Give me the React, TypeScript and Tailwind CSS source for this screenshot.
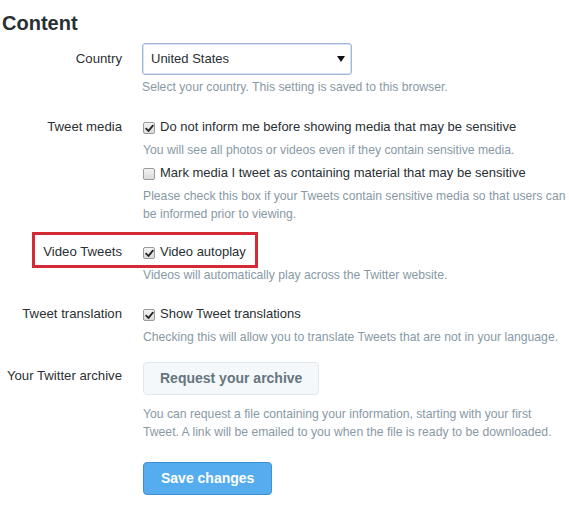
import React from "react";

function Check({ checked }: { checked: boolean }) {
  return (
    <span className="mt-[4px] flex h-[12px] w-[12px] shrink-0 items-center justify-center rounded-[2px] border border-[#9a9a9a] bg-gradient-to-b from-[#f4f4f4] to-[#dadada]">
      {checked && (
        <svg width="9" height="9" viewBox="0 0 9 9">
          <path d="M1.2 4.6 L3.5 7 L7.8 1.6" fill="none" stroke="#222" strokeWidth="1.8" strokeLinecap="round" strokeLinejoin="round" />
        </svg>
      )}
    </span>
  );
}

function Option({ checked, text }: { checked: boolean; text: string }) {
  return (
    <div className="flex items-start gap-[5px] whitespace-nowrap text-[13px] leading-[18px] text-[#292f33]">
      <Check checked={checked} />
      <span>{text}</span>
    </div>
  );
}

function Hint({ children, className = "" }: { children: React.ReactNode; className?: string }) {
  return <p className={`whitespace-nowrap text-[12.2px] leading-[18px] text-[#8899a6] ${className}`}>{children}</p>;
}

function Label({ children, className = "" }: { children: React.ReactNode; className?: string }) {
  return (
    <div className={`w-[122px] shrink-0 whitespace-nowrap text-right text-[13.2px] leading-[18px] text-[#292f33] ${className}`}>
      {children}
    </div>
  );
}

export default function App() {
  return (
    <div className="h-[506px] w-[569px] overflow-hidden bg-white" style={{ fontFamily: '"Liberation Sans", Arial, sans-serif' }}>
      <h1 className="pl-[2px] pt-[11px] text-[20px] font-bold leading-[24px] text-[#292f33]">Content</h1>

      {/* Country */}
      <div className="mt-[8px] flex">
        <Label className="leading-[32px]">Country</Label>
        <div className="ml-[20px] flex flex-col">
          <div className="flex h-[32px] w-[210px] items-center justify-between rounded-[3px] border border-[#9fb8da] pl-[8px] pr-[6px] text-[13px] text-[#292f33] shadow-[inset_0_0_0_1px_#d6e2f1]">
            <span>United States</span>
            <svg width="8" height="6" viewBox="0 0 8 6">
              <path d="M0 0 H8 L4 6 Z" fill="#111" />
            </svg>
          </div>
          <Hint className="mt-[3px]">Select your country. This setting is saved to this browser.</Hint>
        </div>
      </div>

      {/* Tweet media */}
      <div className="mt-[22px] flex">
        <Label>Tweet media</Label>
        <div className="ml-[21px] flex flex-col">
          <Option checked text="Do not inform me before showing media that may be sensitive" />
          <Hint className="mt-[5px]">You will see all photos or videos even if they contain sensitive media.</Hint>
          <div className="mt-[5px]">
            <Option checked={false} text="Mark media I tweet as containing material that may be sensitive" />
          </div>
          <Hint className="mt-[5px]">
            Please check this box if your Tweets contain sensitive media so that users can
            <br />
            be informed prior to viewing.
          </Hint>
        </div>
      </div>

      {/* Video Tweets */}
      <div className="relative mt-[20px] flex">
        <div className="pointer-events-none absolute left-[32px] top-[-11px] h-[36px] w-[226px] border-[3px] border-[#d42a35]" />
        <Label>Video Tweets</Label>
        <div className="ml-[21px] flex flex-col">
          <Option checked text="Video autoplay" />
          <Hint className="mt-[5px]">Videos will automatically play across the Twitter website.</Hint>
        </div>
      </div>

      {/* Tweet translation */}
      <div className="mt-[21px] flex">
        <Label>Tweet translation</Label>
        <div className="ml-[21px] flex flex-col">
          <Option checked text="Show Tweet translations" />
          <Hint className="mt-[5px]">Checking this will allow you to translate Tweets that are not in your language.</Hint>
        </div>
      </div>

      {/* Archive */}
      <div className="mt-[16px] flex">
        <Label className="mt-[5px]">Your Twitter archive</Label>
        <div className="ml-[21px] flex flex-col items-start">
          <button className="h-[33px] rounded-[4px] border border-[#e1e8ed] bg-[#f5f8fa] px-[16px] text-[14px] font-bold text-[#66757f]">
            Request your archive
          </button>
          <Hint className="mt-[10px]">
            You can request a file containing your information, starting with your first
            <br />
            Tweet. A link will be emailed to you when the file is ready to be downloaded.
          </Hint>
          <button className="mt-[21px] h-[33px] rounded-[4px] border border-[#3b8fd3] bg-[#55acee] px-[17px] text-[14px] font-bold text-white">
            Save changes
          </button>
        </div>
      </div>
    </div>
  );
}
